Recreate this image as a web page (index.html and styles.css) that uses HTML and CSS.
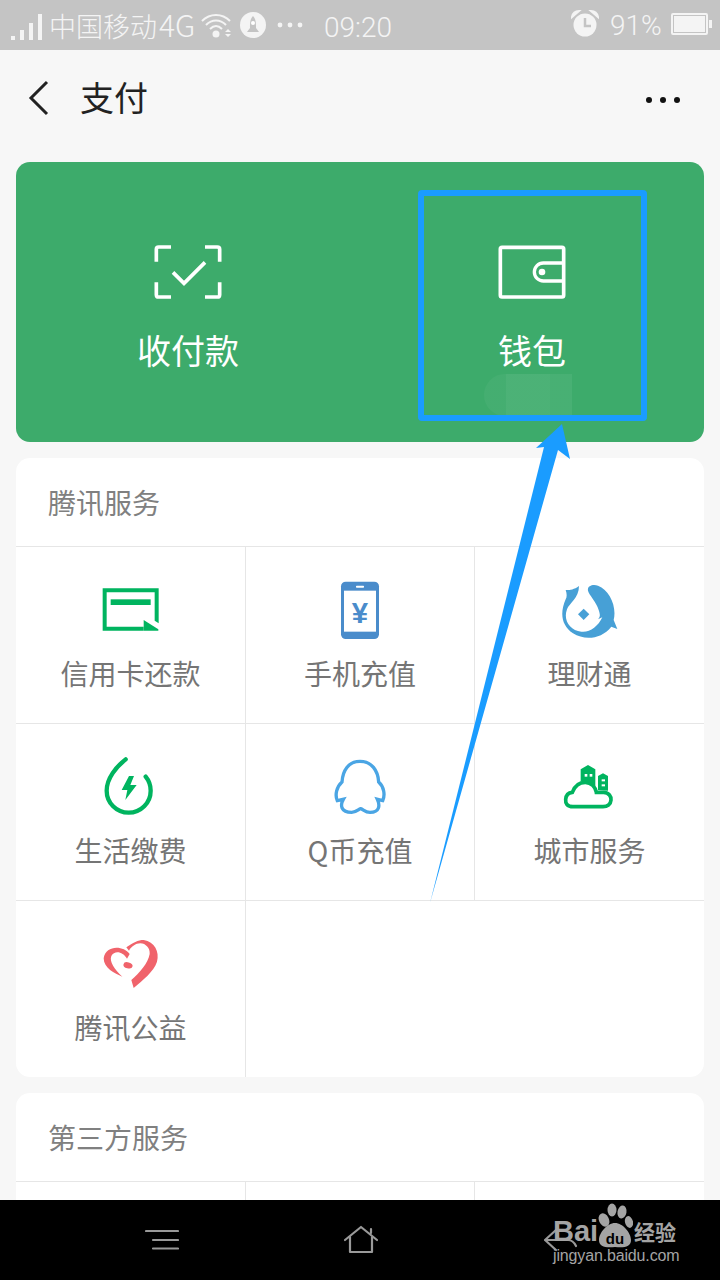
FILE: index.html
```html
<!DOCTYPE html>
<html lang="zh-CN">
<head>
  <meta charset="UTF-8">
  <meta name="viewport" content="width=device-width, initial-scale=1.0">
  <title>支付</title>
  <link rel="stylesheet" href="styles.css">
</head>
<body>

<div class="phone">
  <!-- status bar -->
  <div class="status">
    <svg class="signal" viewBox="0 0 32 28" width="32" height="28">
      <rect x="0" y="22" width="4" height="4"/>
      <rect x="9" y="16" width="4" height="10"/>
      <rect x="18" y="9" width="4" height="17"/>
      <rect x="27" y="0" width="4" height="26"/>
    </svg>
    <span class="carrier">中国移动<span class="carrier-net">4G</span></span>
    <svg class="wifi" viewBox="0 0 30 26" width="30" height="26">
      <path d="M1 8C9 0 21 0 29 8M5 12C11 6 19 6 25 12M9 16C13 12 17 12 21 16" fill="none" stroke="currentColor" stroke-width="2"/>
      <circle cx="15" cy="21" r="3.5" fill="currentColor"/>
      <path d="M24 19h6l-3-3zM24 21h6l-3 3z" fill="currentColor"/>
    </svg>
    <svg class="rocket" viewBox="0 0 26 26" width="26" height="26">
      <circle cx="13" cy="13" r="13" fill="currentColor"/>
      <path d="M13 4C10 7 10 11 10 16L7 20H19L16 16C16 11 16 7 13 4Z" fill="#c4c4c4"/>
      <circle cx="13" cy="11" r="2" fill="#fff"/>
    </svg>
    <svg class="more-small" viewBox="0 0 26 6" width="26" height="6">
      <circle cx="3" cy="3" r="2.4"/><circle cx="13" cy="3" r="2.4"/><circle cx="23" cy="3" r="2.4"/>
    </svg>
    <span class="clock">09:20</span>
    <svg class="alarm" viewBox="0 0 28 28" width="28" height="28">
      <circle cx="14" cy="15" r="11.5" fill="currentColor"/>
      <path d="M1 7C2 2 5 1 8 1L1 7ZM27 7C26 2 23 1 20 1L27 7Z" fill="currentColor" stroke="currentColor" stroke-width="2"/>
      <path d="M14 8V16H20" fill="none" stroke="#c4c4c4" stroke-width="2.5"/>
    </svg>
    <span class="percent">91%</span>
    <svg class="battery" viewBox="0 0 42 22" width="42" height="22">
      <rect x="1" y="1" width="35" height="20" rx="1" fill="none" stroke="currentColor" stroke-width="2"/>
      <rect x="3" y="3" width="31" height="16" fill="currentColor"/>
      <rect x="38" y="7" width="3" height="8" fill="currentColor"/>
    </svg>
  </div>

  <!-- title bar -->
  <div class="topbar">
    <svg class="back" viewBox="0 0 22 36" width="22" height="36">
      <path d="M19 2L3 18L19 34" fill="none" stroke="#222" stroke-width="3"/>
    </svg>
    <span class="title">支付</span>
    <svg class="more" viewBox="0 0 36 8" width="36" height="8">
      <circle cx="4" cy="4" r="3"/><circle cx="18" cy="4" r="3"/><circle cx="32" cy="4" r="3"/>
    </svg>
  </div>

  <main class="content">
    <!-- green card -->
    <section class="pay-card">
      <div class="pay-item">
        <svg viewBox="66 36 216 180" width="72" height="60">
          <path d="M79 95V58Q79 51 86 51H123M225 51H262Q269 51 269 58V95M79 157V194Q79 201 86 201H123M225 201H262Q269 201 269 194V157" fill="none" stroke="#fff" stroke-width="11"/>
          <path d="M129 127L162 160L225 97" fill="none" stroke="#fff" stroke-width="11"/>
        </svg>
        <span>收付款</span>
      </div>
      <div class="pay-item">
        <svg viewBox="288 186 216 180" width="72" height="60">
          <rect x="301" y="202" width="190" height="149" rx="5" fill="none" stroke="#fff" stroke-width="11"/>
          <path d="M491 249H430A27 27 0 0 0 430 303H491" fill="none" stroke="#fff" stroke-width="10"/>
          <circle cx="426" cy="276" r="10" fill="#fff"/>
        </svg>
        <span>钱包</span>
      </div>
    </section>

    <!-- tencent services -->
    <section class="card">
      <h2>腾讯服务</h2>
      <div class="grid">
        <div class="cell">
          <svg viewBox="64 30 180 180" width="60" height="60">
            <path fill="#00b45f" d="M69 55H237V160L225 152V67H81V170H192V182H69Z"/>
            <path fill="#00b45f" d="M192 150L236 178V182H192Z"/>
            <rect x="93" y="88" width="120" height="17" fill="#00b45f"/>
          </svg>
          <span>信用卡还款</span>
        </div>
        <div class="cell">
          <svg viewBox="750 30 180 180" width="60" height="60">
            <rect x="783" y="35" width="114" height="172" rx="14" fill="#4a8ccb"/>
            <rect x="792" y="62" width="96" height="123" fill="#fff"/>
            <rect x="828" y="47" width="24" height="6" rx="2" fill="#fff"/>
            <text x="840" y="158" text-anchor="middle" class="yen">¥</text>
          </svg>
          <span>手机充值</span>
        </div>
        <div class="cell">
          <svg viewBox="91 30 180 180" width="60" height="60">
            <path fill="#47a0d6" d="M148 48C130 62 112 60 108 60C112 72 112 80 108 88C90 130 95 165 130 190C165 212 215 208 245 170L263 177L252 150C262 110 240 60 205 47C190 42 172 47 175 62C178 75 200 95 207 120C212 135 212 140 205 148L218 142C205 170 180 188 155 185C120 182 100 150 112 118C118 100 148 85 148 48Z"/>
            <path fill="#47a0d6" d="M162 116L179 133L162 150L145 133Z"/>
          </svg>
          <span>理财通</span>
        </div>
        <div class="cell">
          <svg viewBox="64 21 180 180" width="60" height="60">
            <path d="M138 28C110 50 81 85 81 122A66 66 0 0 0 213 122C213 105 208 92 198 80" fill="none" stroke="#00b45f" stroke-width="13" stroke-linecap="round"/>
            <path d="M148 78L126 120H143L137 150L171 105H152L163 78Z" fill="#00b45f"/>
          </svg>
          <span>生活缴费</span>
        </div>
        <div class="cell">
          <svg viewBox="750 21 180 180" width="60" height="60">
            <path d="M840 34C805 34 788 62 786 96C770 110 764 135 772 152L790 148C780 165 782 187 815 187C830 187 835 178 842 176C850 178 855 187 870 187C900 187 900 165 892 148L908 152C916 135 912 110 896 96C894 62 875 34 840 34Z" fill="none" stroke="#4aa5e4" stroke-width="10"/>
          </svg>
          <span>Q币充值</span>
        </div>
        <div class="cell">
          <svg viewBox="91 21 180 180" width="60" height="60">
            <path d="M130 170C112 170 107 160 108 148C109 135 118 128 128 127C135 108 150 97 167 97C185 97 198 112 200 127H222C238 128 245 140 244 150C243 163 233 170 220 170Z" fill="none" stroke="#00b45f" stroke-width="11"/>
            <path d="M153 95V58L175 45L197 58V118C192 105 175 90 153 95Z" fill="#00b45f"/>
            <path d="M205 120V78L220 70L235 78V122Z" fill="#00b45f"/>
            <rect x="165" y="72" width="8" height="8" fill="#fff"/><rect x="180" y="72" width="8" height="8" fill="#fff"/>
            <rect x="216" y="88" width="10" height="6" fill="#fff"/><rect x="216" y="103" width="10" height="6" fill="#fff"/>
          </svg>
          <span>城市服务</span>
        </div>
        <div class="cell">
          <svg viewBox="64 12 180 180" width="60" height="60">
            <path fill="#f0636b" d="M140 52C160 38 175 30 192 30C225 36 240 65 232 95C222 125 190 150 162 174L155 150C180 128 205 100 210 72C212 55 198 40 182 40C168 40 155 50 148 62Z"/>
            <path fill="#f0636b" d="M150 72C130 45 78 45 72 85C72 115 105 130 128 140C105 118 88 95 95 78C105 60 130 65 142 86Z"/>
            <ellipse cx="145" cy="106" rx="14" ry="9" transform="rotate(15 145 106)" fill="#f0636b"/>
          </svg>
          <span>腾讯公益</span>
        </div>
        <div class="cell"></div>
        <div class="cell"></div>
      </div>
    </section>

    <!-- third party -->
    <section class="card">
      <h2>第三方服务</h2>
      <div class="grid">
        <div class="cell"></div>
        <div class="cell"></div>
        <div class="cell"></div>
      </div>
    </section>
  </main>

  <!-- phone nav keys -->
  <div class="keys">
    <svg class="key-menu" viewBox="0 0 34 24" width="34" height="24">
      <path d="M1 3H33M8 12H33M8 20.500H33" fill="none" stroke="#999" stroke-width="2.2" stroke-linecap="round"/>
    </svg>
    <svg class="key-home" viewBox="0 0 34 30" width="34" height="30">
      <path d="M1 15L17 2L33 15M6 12V27H28V12M27 8V4" fill="none" stroke="#999" stroke-width="2.2" stroke-linejoin="round" stroke-linecap="round"/>
    </svg>
    <svg class="key-back" viewBox="0 0 34 24" width="34" height="24">
      <path d="M12 2L1 12L12 22M1 12H24C27 12 30 14 32 18" fill="none" stroke="#999" stroke-width="2.2" stroke-linecap="round"/>
    </svg>
  </div>

  <!-- annotation drawn on top of the screenshot -->
  <div class="smudge"></div>
  <div class="highlight"></div>
  <svg class="arrow" viewBox="0 0 720 1280" width="720" height="1280">
    <path d="M562 424L570 459L558 450L430 903L544 447L536 448Z" fill="#1a9cff"/>
  </svg>

  <div class="watermark">
    <div class="mark-row">
      <span class="mark-bai">Bai</span>
      <svg class="paw" viewBox="0 0 36 46" width="36" height="46">
        <ellipse cx="7" cy="17" rx="5" ry="7" transform="rotate(-25 7 17)"/>
        <ellipse cx="15" cy="7" rx="4.5" ry="6.5"/>
        <ellipse cx="25" cy="9" rx="4.5" ry="6.5" transform="rotate(10 25 9)"/>
        <ellipse cx="32" cy="19" rx="4" ry="6" transform="rotate(-15 32 19)"/>
        <path d="M18 20C26 20 34 30 34 37C34 44 27 45 18 44C9 45 2 44 2 37C2 30 10 20 18 20Z"/>
        <text x="18" y="41" text-anchor="middle" class="mark-du">du</text>
      </svg>
      <span class="mark-jy">经验</span>
    </div>
    <div class="mark-url">jingyan.baidu.com</div>
  </div>
</div>

</body>
</html>
```

FILE: styles.css
```css
* {
  box-sizing: border-box;
}

body {
  margin: 0;
  font-family: "Noto Sans CJK SC", "Noto Sans", sans-serif;
  background: #f7f7f7;
}

.phone {
  position: relative;
  width: 720px;
  height: 1280px;
  display: flex;
  flex-direction: column;
  overflow: hidden;
}

/* status bar */
.status {
  height: 50px;
  flex: none;
  background: #c4c4c4;
  color: #f4f4f4;
  display: flex;
  align-items: center;
  padding-left: 11px;
  font-family: "Roboto", "Noto Sans CJK SC", sans-serif;
  font-weight: 300;
  font-size: 27px;
}

.status svg {
  flex: none;
  fill: currentColor;
}

.signal {
  margin-top: 6px;
}

.carrier {
  margin-left: 6px;
  width: 147px;
  white-space: nowrap;
  font-family: "Noto Sans CJK SC", sans-serif;
  line-height: 50px;
}

.carrier-net {
  font-size: 30px;
  margin-left: 2px;
}

.wifi {
  margin-left: 5px;
  margin-top: 2px;
}

.rocket {
  margin-left: 9px;
}

.more-small {
  margin-left: 11px;
}

.clock {
  margin-left: 21px;
  margin-top: 4px;
  width: 69px;
  font-size: 28px;
}

.alarm {
  margin-left: 178px;
  margin-bottom: 2px;
}

.percent {
  margin-left: 11px;
  width: 51px;
  font-size: 28px;
}

.battery {
  margin-left: 10px;
  margin-bottom: 2px;
}

/* title bar */
.topbar {
  height: 80px;
  flex: none;
  display: flex;
  align-items: center;
  padding: 0 16px 0 28px;
  margin-top: 8px;
  margin-bottom: -8px;
}

.title {
  margin-left: 30px;
  margin-bottom: 4px;
  font-size: 34px;
  color: #222;
}

.more {
  margin-left: auto;
  margin-right: 23px;
  margin-top: 4px;
  fill: #111;
}

/* main column */
.content {
  flex: 1;
  min-height: 0;
  overflow: hidden;
  padding: 32px 16px 0;
  display: flex;
  flex-direction: column;
  gap: 16px;
}

.pay-card {
  flex: none;
  height: 280px;
  border-radius: 14px;
  background: #3dab6b;
  display: grid;
  grid-template-columns: 1fr 1fr;
  color: #fff;
}

.pay-item {
  display: flex;
  flex-direction: column;
  align-items: center;
  padding-top: 80px;
  font-size: 34px;
}

.pay-item span {
  margin-top: 22px;
  line-height: 52px;
}

.card {
  flex: none;
  background: #fff;
  border-radius: 14px;
  overflow: hidden;
}

.card h2 {
  margin: 0;
  height: 88px;
  padding-left: 32px;
  font-size: 28px;
  font-weight: 400;
  line-height: 88px;
  color: #808080;
}

.grid {
  display: grid;
  grid-template-columns: 230px 229px 229px;
  grid-auto-rows: 177px;
}

.cell {
  border-top: 1px solid #e6e6e6;
  border-right: 1px solid #e6e6e6;
  display: flex;
  flex-direction: column;
  align-items: center;
  padding-top: 33px;
  font-size: 28px;
  color: #757575;
}

.cell:nth-child(3n) {
  border-right: none;
}

.cell:nth-child(8) {
  border-right: none;
}

.cell span {
  margin-top: 13px;
  line-height: 40px;
}

.yen {
  font-family: "Liberation Sans", sans-serif;
  font-size: 88px;
  font-weight: 700;
  fill: #4a8ccb;
}

/* phone keys */
.keys {
  height: 80px;
  flex: none;
  background: #000;
  display: grid;
  grid-template-columns: repeat(3, 1fr);
  justify-items: center;
  align-items: center;
  padding: 0 65px;
}

.key-menu {
  margin-right: 2px;
}

.key-home {
  margin-left: 2px;
}

.key-back {
  margin-left: 8px;
}

/* annotation */
.highlight {
  position: absolute;
  left: 418px;
  top: 190px;
  width: 229px;
  height: 231px;
  border: 6px solid #1a9cff;
  border-radius: 4px;
}

.smudge {
  position: absolute;
  left: 484px;
  top: 374px;
  width: 88px;
  height: 42px;
  border-radius: 24px 0 0 24px;
  background: linear-gradient(to right, rgba(255, 255, 255, 0.04) 25%, rgba(255, 255, 255, 0.08) 25%, rgba(255, 255, 255, 0.08) 75%, rgba(255, 255, 255, 0.06) 75%);
}

.arrow {
  position: absolute;
  left: 0;
  top: 0;
}

/* baidu watermark */
.watermark {
  position: absolute;
  left: 553px;
  top: 1203px;
  color: #a4a4a4;
  font-family: "Liberation Sans", sans-serif;
}

.watermark .mark-row {
  display: flex;
  align-items: flex-end;
  height: 46px;
}

.mark-bai {
  font-size: 29px;
  font-weight: 700;
  line-height: 36px;
  width: 45px;
}

.paw {
  fill: #a4a4a4;
  margin-left: -1px;
}

.mark-du {
  font-size: 15px;
  font-weight: 700;
  fill: #000;
}

.mark-jy {
  margin-left: 1px;
  font-family: "Noto Sans CJK SC", sans-serif;
  font-size: 21px;
  font-weight: 700;
  line-height: 36px;
}

.mark-url {
  font-size: 16px;
  line-height: 18px;
  margin-top: -2px;
  letter-spacing: -0.15px;
}
```
